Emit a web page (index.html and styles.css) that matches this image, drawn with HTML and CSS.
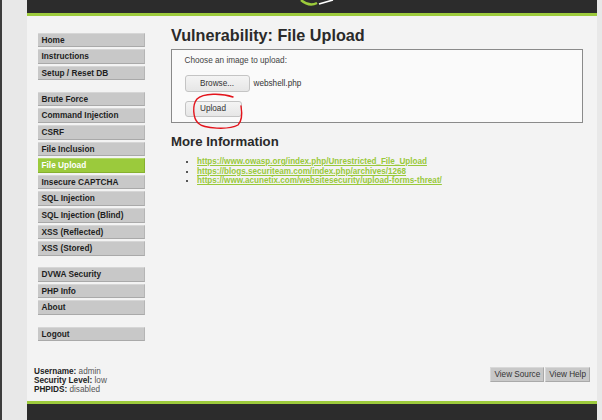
FILE: index.html
```html
<!DOCTYPE html>
<html>
<head>
<meta charset="utf-8">
<link rel="stylesheet" href="styles.css">
</head>
<body>
<div class="page">
  <div class="header">
    <svg class="logo" width="40" height="8" viewBox="0 0 40 8">
      <path d="M4,0 Q12,7 20,3" fill="none" stroke="#9ccb3b" stroke-width="2.4"/>
      <path d="M22,4 L36,0" fill="none" stroke="#ffffff" stroke-width="1.6"/>
    </svg>
  </div>
  <div class="main">
    <div class="top">
      <div class="sidebar">
        <ul class="menu">
          <li>Home</li>
          <li>Instructions</li>
          <li>Setup / Reset DB</li>
        </ul>
        <ul class="menu">
          <li>Brute Force</li>
          <li>Command Injection</li>
          <li>CSRF</li>
          <li>File Inclusion</li>
          <li class="active">File Upload</li>
          <li>Insecure CAPTCHA</li>
          <li>SQL Injection</li>
          <li>SQL Injection (Blind)</li>
          <li>XSS (Reflected)</li>
          <li>XSS (Stored)</li>
        </ul>
        <ul class="menu">
          <li>DVWA Security</li>
          <li>PHP Info</li>
          <li>About</li>
        </ul>
        <ul class="menu">
          <li>Logout</li>
        </ul>
      </div>
      <div class="content">
        <h1 class="title">Vulnerability: File Upload</h1>
        <div class="box">
          <div class="label">Choose an image to upload:</div>
          <div class="filerow">
            <span class="btn browse">Browse...</span>
            <span class="filename">webshell.php</span>
          </div>
          <span class="btn upload">Upload</span>
          <svg class="mark" width="80" height="90" viewBox="0 0 80 90">
            <path d="M61,47 C50,43 31,43 25,49 C20,55 21,68 26,73 C32,79 57,80 66,75 C70,71 70,62 69,56" fill="none" stroke="#e3141c" stroke-width="1.4" stroke-linecap="round"/>
          </svg>
        </div>
        <h2 class="more">More Information</h2>
        <ul class="links">
          <li><a>https://www.owasp.org/index.php/Unrestricted_File_Upload</a></li>
          <li><a>https://blogs.securiteam.com/index.php/archives/1268</a></li>
          <li><a>https://www.acunetix.com/websitesecurity/upload-forms-threat/</a></li>
        </ul>
      </div>
    </div>
    <div class="bottom">
      <div class="info">
        <div><b>Username:</b> admin</div>
        <div><b>Security Level:</b> low</div>
        <div><b>PHPIDS:</b> disabled</div>
      </div>
      <div class="tools">
        <span class="tool">View Source</span><span class="tool">View Help</span>
      </div>
    </div>
  </div>
  <div class="footer"></div>
</div>
</body>
</html>
```
FILE: styles.css
```css
html, body {
  margin: 0;
  padding: 0;
}
body {
  background: #e8e8e8;
  border-left: 2px solid #3c3c3c;
  height: 420px;
  overflow: hidden;
  font-family: "Liberation Sans", Arial, sans-serif;
  color: #222;
}
.page {
  margin-left: 25px;
  width: 570px;
}
.header {
  height: 13px;
  background: #2c2c2c;
  border-bottom: 3px solid #9dcb3c;
  padding-left: 270px;
  box-sizing: content-box;
  overflow: hidden;
}
.logo {
  display: block;
}
.main {
  height: 385px;
  background: #f3f3f3;
  display: flex;
  flex-direction: column;
}
.top {
  flex: 1;
  display: flex;
}
.sidebar {
  width: 107px;
  padding: 16.5px 26px 0 11px;
  flex: none;
}
.menu {
  list-style: none;
  margin: 0 0 11.5px 0;
  padding: 0;
}
.menu li {
  height: 14.6px;
  margin-bottom: 2px;
  box-sizing: border-box;
  background: #c8c8c8;
  border-bottom: 1px solid #a9a9a9;
  border-right: 1px solid #b5b5b5;
  border-top: 1px solid #d6d6d6;
  padding-left: 3.5px;
  font-size: 8.3px;
  font-weight: bold;
  line-height: 12.6px;
  color: #1e1e1e;
  white-space: nowrap;
}
.menu li.active {
  background: #9bca3c;
  border-color: #b3d96a #86b02f #86b02f #b3d96a;
  color: #fff;
}
.content {
  flex: 1;
  margin-right: 14px;
}
.title {
  margin: 9px 0 4px 0;
  font-size: 16.2px;
  line-height: 20px;
  font-weight: bold;
  color: #2a2a2a;
}
.box {
  position: relative;
  height: 74px;
  box-sizing: border-box;
  border: 1.5px solid #8a8a8a;
  background: #fafafa;
  padding: 5.5px 0 0 12.5px;
}
.label {
  font-size: 8.2px;
  line-height: 10px;
  color: #444;
}
.filerow {
  display: flex;
  align-items: center;
  gap: 4px;
  margin: 9px 0 9px 0;
}
.btn {
  display: flex;
  align-items: center;
  justify-content: center;
  box-sizing: border-box;
  background: linear-gradient(#f4f4f4, #e6e6e6);
  border: 1px solid #c4c4c4;
  border-radius: 3px;
  font-size: 8.2px;
  color: #333;
}
.browse {
  width: 65px;
  height: 17px;
}
.upload {
  width: 57px;
  height: 16px;
}
.filename {
  font-size: 8.2px;
  color: #333;
}
.mark {
  position: absolute;
  left: 0;
  top: 0;
}
.more {
  margin: 11px 0 7px 0;
  font-size: 13.2px;
  line-height: 16px;
  font-weight: bold;
  color: #2a2a2a;
}
.links {
  margin: 0;
  padding-left: 26px;
  font-size: 8.15px;
  line-height: 9.7px;
}
.links a {
  color: #99c93a;
  font-weight: bold;
  text-decoration: underline;
}
.bottom {
  display: flex;
  justify-content: space-between;
  align-items: flex-start;
  padding: 0 7px 6.6px 7px;
}
.info {
  font-size: 8.2px;
  line-height: 9.3px;
  color: #555;
}
.info b {
  color: #222;
}
.tools {
  display: flex;
  gap: 1px;
}
.tool {
  height: 15px;
  box-sizing: border-box;
  background: #c8c8c8;
  border: 1px solid #a9a9a9;
  border-top-color: #d8d8d8;
  border-left-color: #d8d8d8;
  font-size: 8.2px;
  line-height: 13px;
  padding: 0 3px;
  color: #333;
}
.footer {
  height: 17px;
  background: #2c2c2c;
  border-top: 3px solid #9dcb3c;
}
```
